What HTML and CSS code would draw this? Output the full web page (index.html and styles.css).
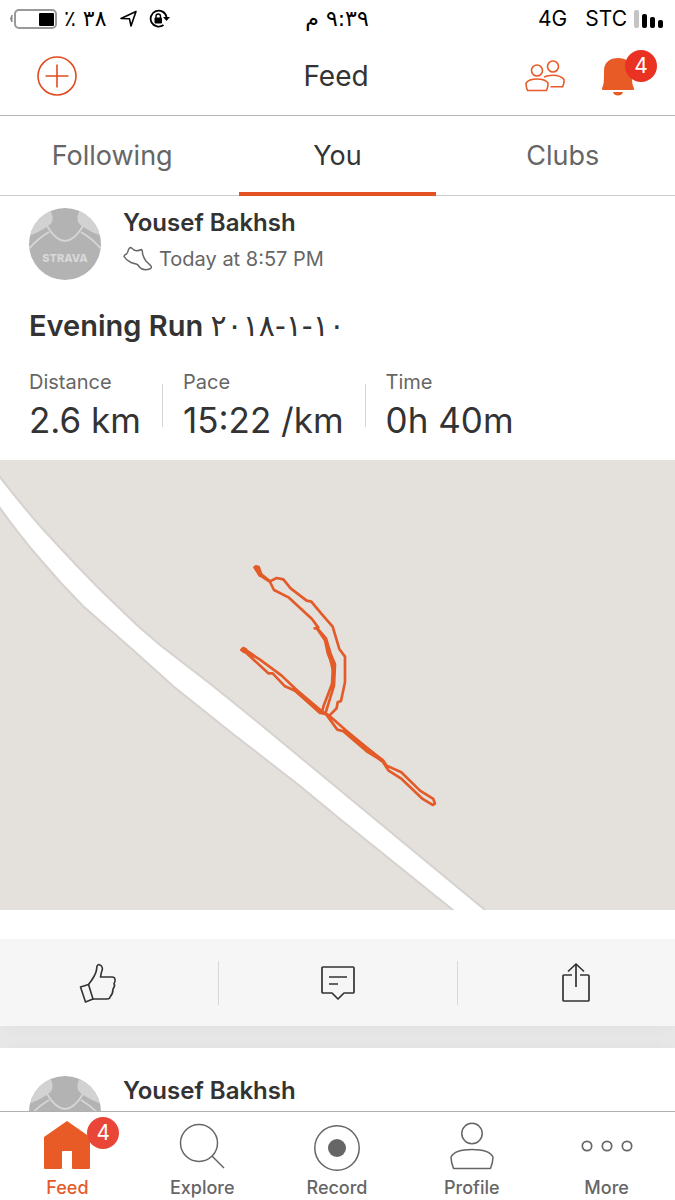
FILE: index.html
```
<!DOCTYPE html>
<html lang="en">
<head>
<meta charset="utf-8">
<meta name="viewport" content="width=device-width, initial-scale=1">
<title>Feed</title>
<link rel="stylesheet" href="styles.css">
</head>
<body>
<svg class="defs" aria-hidden="true">
  <symbol id="avatar" viewBox="0 0 72 72">
    <clipPath id="round"><circle cx="36" cy="36" r="36"/></clipPath>
    <g clip-path="url(#round)">
      <rect width="72" height="72" fill="#b3b3b3"/>
      <path d="M0 0H20Q25 8 23 14Q19 20 0 28Z" fill="#d2d2d2"/>
      <path d="M72 0H52Q47 8 49 14Q53 20 72 28Z" fill="#d2d2d2"/>
      <path d="M18 18Q27 33 36 33Q45 33 54 18M20 24Q8 31 0 41M52 24Q64 31 72 41" fill="none" stroke="#d6d6d6" stroke-width="1.800"/>
    </g>
  </symbol>
</svg>
<div class="app">
  <header class="top">
    <div class="status">
      <div class="status-side">
        <svg width="47" height="20" viewBox="0 0 47 20" aria-hidden="true">
          <path d="M2 6Q-1 10 2 13Z" fill="#888" stroke="#888"/>
          <rect x="5" y="1" width="41" height="18" rx="4" fill="#fff" stroke="#999" stroke-width="2"/>
          <rect x="29" y="4" width="15" height="13" rx="1"/>
        </svg>
        <span class="arabic" dir="rtl" lang="ar">٣٨ ٪</span>
        <svg class="locate" width="18" height="18" viewBox="0 0 18 18" fill="none" stroke="#000" stroke-width="1.600" stroke-linejoin="round" aria-hidden="true"><path d="M16 1.500L1 8.500L9.500 8.800L11 16Z"/></svg>
        <svg width="21" height="20" viewBox="0 0 21 20" aria-hidden="true">
          <path d="M17.500 8A8 8 0 1 0 14.500 16" fill="none" stroke="#000" stroke-width="1.800"/>
          <path d="M14 8H21L17.500 12Z"/>
          <rect x="5.500" y="8.500" width="7.500" height="6" rx="1"/>
          <path d="M7 9V7.200Q7 5 9.200 5Q11.500 5 11.500 7.200V9" fill="none" stroke="#000" stroke-width="1.400"/>
        </svg>
      </div>
      <span class="arabic" dir="rtl" lang="ar">٩:٣٩ م</span>
      <div class="status-side status-end">
        <span>4G</span>
        <span class="carrier">STC</span>
        <svg width="30" height="18" viewBox="0 0 30 18" aria-hidden="true">
          <rect width="5" height="18" rx="2" fill="#c4c4c4"/>
          <rect x="8" y="4" width="5" height="14" rx="2"/>
          <rect x="16" y="7" width="5" height="11" rx="2"/>
          <rect x="24" y="10" width="5" height="8" rx="2"/>
        </svg>
      </div>
    </div>
    <div class="nav">
      <button class="icon-button" aria-label="Add">
        <svg width="40" height="40" viewBox="0 0 40 40" fill="none" stroke="#e34a20" stroke-width="1.600"><circle cx="20" cy="20" r="19"/><path d="M8.500 20H31.500M20 8.500V31.500"/></svg>
      </button>
      <h1>Feed</h1>
      <div class="nav-end">
        <button class="icon-button" aria-label="Find friends">
          <svg width="40" height="32" viewBox="0 0 40 32" fill="none" stroke="#e85a2a" stroke-width="1.600" stroke-linejoin="round">
            <circle cx="12" cy="10.500" r="5.500"/><circle cx="28" cy="6.500" r="5.500"/>
            <path d="M2.500 30.500C1 27 1 24 1.200 23C3 20 8 19 12 19C16 19 21 20 23 23C23.200 25 23 27 21.500 30.500Z"/>
            <path d="M19 17C22 15.600 25 15.300 28 15.300C33 15.300 37 17 39 19.500C39.300 22 39 24 37.500 26.800H25.500"/>
          </svg>
        </button>
        <button class="icon-button badge-host" aria-label="Notifications, 4 new">
          <svg width="34" height="40" viewBox="0 0 34 40" fill="#e85b26"><path d="M3 15C3 6 9 2 17 2C25 2 31 6 31 15C31 24 31 29 33 32Q33.500 34 32 34H2Q.500 34 1 32C3 29 3 24 3 15ZM12 36H22Q21 39.500 17 39.500Q13 39.500 12 36Z"/></svg>
          <span class="badge badge-bell">4</span>
        </button>
      </div>
    </div>
    <nav class="tabs">
      <a href="#following">Following</a>
      <a href="#you" class="active" aria-current="page">You</a>
      <a href="#clubs">Clubs</a>
    </nav>
  </header>

  <main class="feed">
    <article class="card">
      <div class="author">
        <svg class="avatar" viewBox="0 0 72 72" aria-hidden="true"><use href="#avatar"/><text x="36" y="54" text-anchor="middle" class="avatar-word">STRAVA</text></svg>
        <div>
          <h2>Yousef Bakhsh</h2>
          <p class="when">
            <svg width="30" height="26" viewBox="0 0 30 26" fill="none" stroke="#666" stroke-width="1.500" stroke-linejoin="round" aria-hidden="true"><path d="M8 1.500L11 4Q14 5.500 18.500 3.500Q19.500 4 19.500 7Q20 11 23 15L28 20Q29 22.500 26.500 23Q22 24.500 18 22.500Q16 21 14.500 18.500L8 16.500Q3 14 1 10.500Q1 9 3.500 8Q5 6.500 5.500 3.500Q6.500 1.500 8 1.500Z"/></svg>
            Today at 8:57 PM
          </p>
        </div>
      </div>
      <h3>Evening Run <span class="arabic-title" lang="ar">١٠-١-٢٠١٨</span></h3>
      <dl class="stats">
        <div><dt>Distance</dt><dd>2.6 km</dd></div>
        <div><dt>Pace</dt><dd>15:22 /km</dd></div>
        <div><dt>Time</dt><dd>0h 40m</dd></div>
      </dl>
      <svg class="map" viewBox="0 0 675 450" role="img" aria-label="Route map">
        <path d="M-5 11L0 17Q20 43 40 66Q60 88 80 109Q98 128 117 146Q138 167 160 185Q187 206 213 226L260 264L370 355L485 450L490 460H465L453 450L340 359L300 326L233 274L173 226L133 190L83 146Q60 123 40 99Q20 76 0 48L-5 41Z" fill="#fff" stroke="#d6d2cf" stroke-width="2"/>
        <g transform="translate(220 89) scale(.3333)" fill="none" stroke="#e35b29" stroke-width="8" stroke-linejoin="round" stroke-linecap="round">
          <path d="M110 60L104 55L108 52L116 54L124 76L150 97L170 87L190 91L212 118L260 155L274 158L304 194L338 233L358 300L375 323V400L363 456L353 460L350 478L328 500"/>
          <path d="M110 60L118 78L150 99L162 123L207 146L276 210L295 236L284 238M290 236L318 268L332 315L345 346L342 410L318 488M292 240L315 274L324 315L339 350L336 405L311 470L306 490"/>
          <path d="M64 303L70 297L78 301L72 309ZM74 303L120 332L185 380L230 423L302 484L328 500L380 546L445 600L490 635L500 650L544 670L600 725L640 750L645 764L638 768L608 750L545 690L506 665L487 636L440 607L370 547L352 542L318 496L302 492L225 425L195 412L158 373L145 373L76 309"/>
          <path d="M106 56L120 78M78 305L100 320M225 422L300 490M375 546L485 634M325 300L342 370" stroke-width="11"/>
        </g>
      </svg>
      <div class="actions">
        <button aria-label="Give kudos">
          <svg width="38" height="40" viewBox="0 0 38 40" fill="none" stroke="#333" stroke-width="1.600" stroke-linejoin="round"><path d="M1.500 24L9.500 21.500L14 36L6.500 39Z"/><path d="M9.500 21.500C13 17 17 10 17.500 7C18 3 18 1.500 20 1.500C24 3 24 6 22.500 9L21.500 14H33Q36.500 14 36 18Q36 19 35 20.500Q36.500 23 34 26Q34 31 31 34Q31 36 28 36H14"/></svg>
        </button>
        <button aria-label="Comment">
          <svg width="34" height="34" viewBox="0 0 34 34" fill="none" stroke="#333" stroke-width="1.700" stroke-linejoin="round"><path d="M2 1H32Q33 1 33 2V26Q33 27 32 27H23L17 33L11 27H2Q1 27 1 26V2Q1 1 2 1ZM8 11H26M8 18H17"/></svg>
        </button>
        <button aria-label="Share">
          <svg width="28" height="40" viewBox="0 0 28 40" fill="none" stroke="#333" stroke-width="1.700" stroke-linejoin="round"><path d="M10 12H2Q1 12 1 13V37Q1 38 2 38H26Q27 38 27 37V13Q27 12 26 12H18M14 24V1M6 8.500L14 1L22 8.500"/></svg>
        </button>
      </div>
    </article>
    <article class="card card-next">
      <div class="author">
        <svg class="avatar" viewBox="0 0 72 72" aria-hidden="true"><use href="#avatar"/></svg>
        <div><h2>Yousef Bakhsh</h2></div>
      </div>
    </article>
  </main>

  <nav class="tabbar">
    <a href="#feed" class="current" aria-current="page">
      <span class="glyph badge-host">
        <svg width="48" height="50" viewBox="0 0 48 50" fill="#e85b26"><path d="M24 0L47 16V47Q47 48 46 48H30Q29 48 29 47V30H19V47Q19 48 18 48H2Q1 48 1 47V16Z"/></svg>
        <span class="badge badge-home">4</span>
      </span>
      Feed
    </a>
    <a href="#explore">
      <span class="glyph"><svg width="46" height="46" viewBox="0 0 46 46" fill="none" stroke="#666" stroke-width="1.500"><circle cx="20" cy="20" r="18.500"/><path d="M33 33L45 45"/></svg></span>
      Explore
    </a>
    <a href="#record">
      <span class="glyph"><svg width="48" height="50" viewBox="0 0 48 50"><circle cx="24" cy="27" r="22.200" fill="none" stroke="#666" stroke-width="1.500"/><circle cx="24" cy="27" r="9" fill="#666"/></svg></span>
      Record
    </a>
    <a href="#profile">
      <span class="glyph"><svg width="44" height="48" viewBox="0 0 44 48" fill="none" stroke="#666" stroke-width="1.500"><circle cx="22" cy="11.500" r="10.200"/><path d="M3.500 46.500Q1 40 1 35C4 29 15 27.500 22 27.500C29 27.500 40 29 43 35Q43 40 40.500 46.500Z" stroke-linejoin="round"/></svg></span>
      Profile
    </a>
    <a href="#more">
      <span class="glyph"><svg width="52" height="48" viewBox="0 0 52 48" fill="none" stroke="#666" stroke-width="1.700"><circle cx="6" cy="24" r="4.700"/><circle cx="26" cy="24" r="4.700"/><circle cx="46" cy="24" r="4.700"/></svg></span>
      More
    </a>
  </nav>
</div>
</body>
</html>
```
FILE: styles.css
```
* { box-sizing: border-box; }
body, h1, h2, h3, p, dl, dd { margin: 0; }
body {
  font-family: Inter, "DejaVu Sans", sans-serif;
  color: #333;
  background: #fff;
}
a { color: inherit; text-decoration: none; }
button {
  padding: 0;
  border: 0;
  background: none;
  font: inherit;
  color: inherit;
}
svg { display: block; flex: none; }
.defs { position: absolute; width: 0; height: 0; }
.app { display: flex; flex-direction: column; height: 100vh; overflow: hidden; }
.top { flex: none; }

.status {
  display: grid;
  grid-template-columns: 1fr auto 1fr;
  align-items: center;
  height: 37px;
  padding: 0 11px 0 10px;
  font-size: 21px;
  line-height: 28px;
  color: #000;
}
.status-side { display: flex; align-items: center; gap: 7px; }
.status-end { justify-content: flex-end; }
.carrier { margin-left: 11px; }
.locate { margin: 0 4px 0 7px; }
.arabic { font-family: "DejaVu Sans", sans-serif; font-size: 22px; }

.nav {
  display: grid;
  grid-template-columns: 1fr auto 1fr;
  align-items: center;
  height: 79px;
  padding: 0 40px 0 37px;
  border-bottom: 1px solid #b5b5b5;
}
.nav h1 { font-size: 28px; line-height: 36px; font-weight: 400; }
.nav-end { display: flex; justify-content: flex-end; align-items: center; gap: 36px; }
.icon-button { justify-self: start; }
.badge-host { position: relative; }
.badge {
  position: absolute;
  width: 32px;
  height: 32px;
  border-radius: 50%;
  background: #ea3223;
  color: #fff;
  font-size: 21px;
  font-weight: 400;
  line-height: 32px;
  text-align: center;
}
.badge-bell { left: 24px; top: -6px; }
.badge-home { left: 44px; top: -4px; background: #ea4638; }

.tabs {
  display: grid;
  grid-template-columns: repeat(3, 1fr);
  gap: 29px;
  height: 80px;
  padding: 0 14px;
  border-bottom: 1px solid #ccc;
}
.tabs a {
  height: 80px;
  border-bottom: 4px solid transparent;
  font-size: 27px;
  line-height: 80px;
  text-align: center;
  color: #666;
}
.tabs .active { color: #333; border-color: #e35224; }

.feed { flex: 1; min-height: 0; overflow: hidden; background: #e9e9e9; }
.card { padding-top: 12px; margin-bottom: 22px; background: #fff; box-shadow: 0 2px 18px #dedede; }
.card-next { padding-top: 28px; }
.author { display: flex; gap: 22px; padding: 0 29px; }
.avatar { width: 72px; height: 72px; }
.avatar-word { font: 800 11px Inter, sans-serif; fill: #d8d8d8; }
.author h2 { font-size: 24px; line-height: 29px; font-weight: 600; }
.when {
  display: flex;
  align-items: center;
  gap: 6px;
  margin-top: 8px;
  font-size: 20px;
  line-height: 28px;
  color: #666;
}
.card h3 {
  padding: 28px 29px 0;
  font-size: 29px;
  line-height: 36px;
  font-weight: 600;
}
.arabic-title { font-family: "DejaVu Sans", sans-serif; font-size: 30px; font-weight: 400; }
.stats { display: flex; padding: 24px 29px 16px; }
.stats div { padding: 0 21px; position: relative; }
.stats div:first-child { padding-left: 0; }
.stats div + div::before {
  content: "";
  position: absolute;
  left: 0;
  top: 16px;
  bottom: 17px;
  width: 1px;
  background: #d5d5d5;
}
.stats dt { font-size: 20px; line-height: 28px; color: #666; }
.stats dd { font-size: 35px; line-height: 48px; }
.map { width: 100%; height: auto; background: #e4e0dc; }

.actions {
  display: grid;
  grid-template-columns: 218fr 239fr 218fr;
  align-items: center;
  height: 87px;
  margin-top: 29px;
  background: #f6f6f6;
}
.actions button { display: grid; place-items: center; height: 44px; }
.actions button + button { border-left: 1px solid #d8d8d8; }
.actions button:first-child { padding-right: 22px; }
.actions button:last-child { padding-left: 18px; }

.tabbar {
  flex: none;
  display: grid;
  grid-template-columns: repeat(5, 1fr);
  height: 89px;
  padding: 9px 1px 0 0;
  border-top: 1px solid #b0b0b0;
  background: #fff;
  font-size: 18px;
  line-height: 24px;
  font-weight: 500;
  color: #666;
}
.tabbar a { display: flex; flex-direction: column; align-items: center; gap: 5px; }
.glyph { display: grid; place-items: center; height: 50px; }
.tabbar .current { color: #e35b29; }
```
